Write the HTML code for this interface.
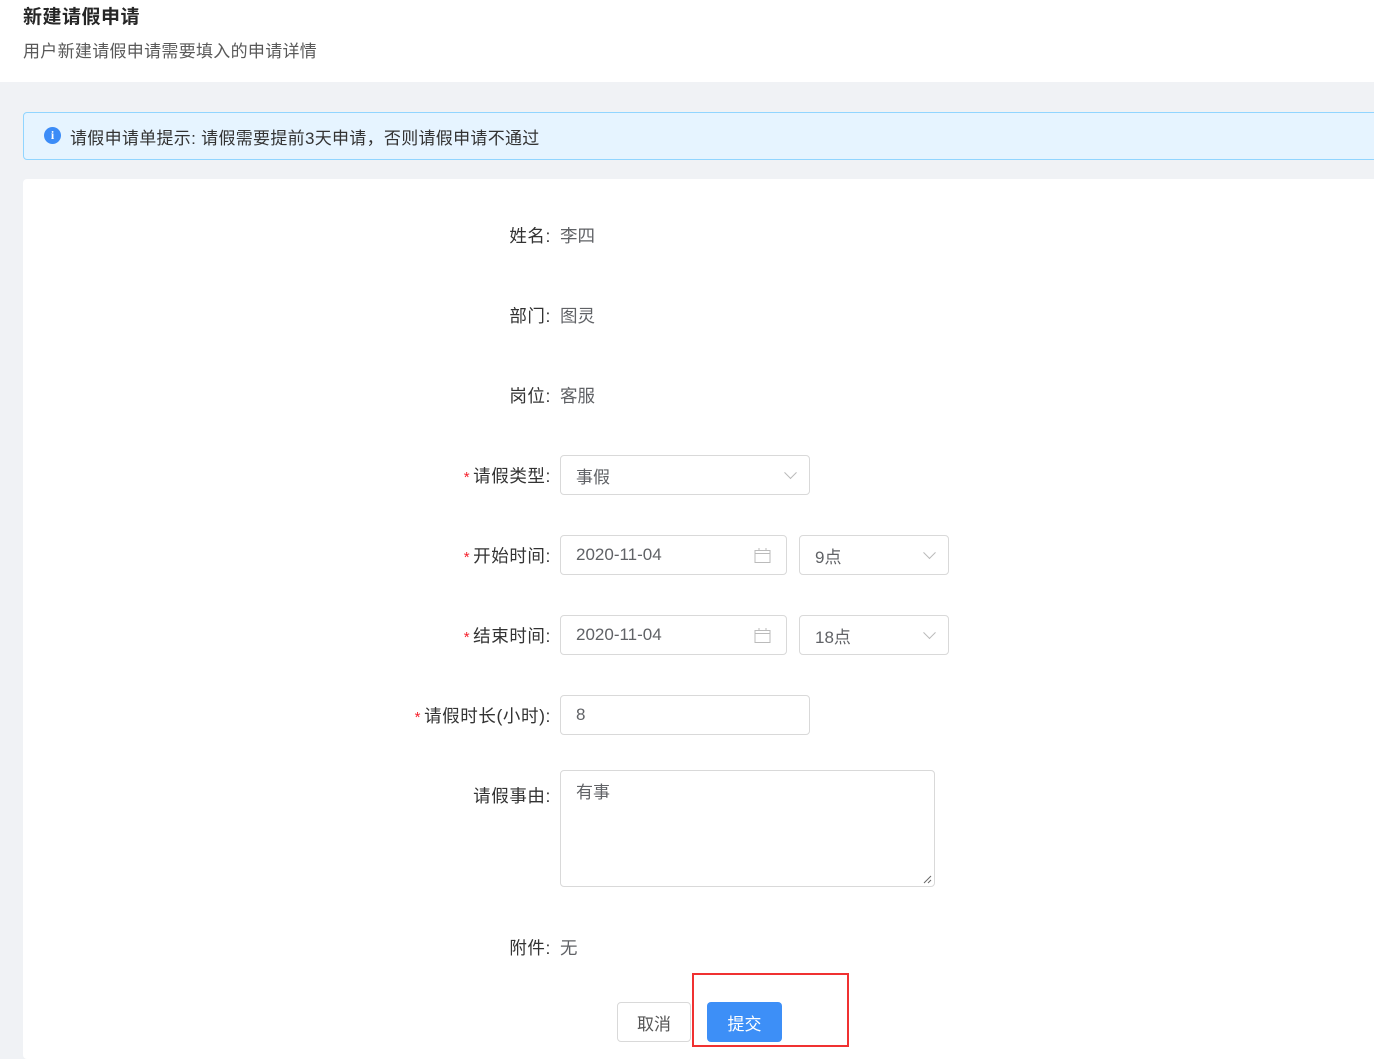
<!DOCTYPE html>
<html><head><meta charset="utf-8"><style>
*{box-sizing:border-box;margin:0;padding:0}
body{width:1374px;height:1049px;overflow:hidden;background:#f0f2f5;font-family:"Liberation Sans","Noto Sans CJK SC",sans-serif;position:relative}
.abs{position:absolute}
.hdr{left:0;top:0;width:1374px;height:82px;background:#fff}
.lbl{position:absolute;right:823px;font-size:17.5px;letter-spacing:0.6px;color:#333;line-height:24px;white-space:nowrap}
.req{color:#f5222d;font-size:15px;margin-right:3px}
.val{position:absolute;left:560px;font-size:17.5px;color:#606266;line-height:24px}
.box{position:absolute;border:1px solid #d9d9d9;border-radius:4px;background:#fff;font-size:17px;color:#606266;padding-left:15px;display:flex;align-items:center}
.chev{position:absolute;right:14px;top:50%;width:9px;height:9px;border-right:1px solid #bbb;border-bottom:1px solid #bbb;transform:translateY(-75%) rotate(45deg)}
</style></head><body>
<div class="abs hdr"></div>
<div class="abs" style="left:23px;top:2px;font-size:19px;font-weight:bold;color:#262626;letter-spacing:0.5px">新建请假申请</div>
<div class="abs" style="left:23px;top:37px;font-size:17px;color:#595959;letter-spacing:0.3px">用户新建请假申请需要填入的申请详情</div>
<div class="abs" style="left:23px;top:112px;width:1360px;height:48px;background:#e6f4ff;border:1px solid #91d5ff;border-radius:4px"></div>
<div class="abs" style="left:44px;top:127px;width:17px;height:17px;border-radius:50%;background:#3c8cf7;color:#fff;font-size:12px;font-weight:bold;text-align:center;line-height:17px;font-family:'Liberation Serif',serif">i</div>
<div class="abs" style="left:70px;top:124px;font-size:17px;color:#333;letter-spacing:0.3px">请假申请单提示: 请假需要提前3天申请，否则请假申请不通过</div>
<div class="abs" style="left:23px;top:179px;width:1360px;height:880px;background:#fff;border-radius:4px"></div>

<div class="lbl" style="top:224px">姓名:</div><div class="val" style="top:224px">李四</div>
<div class="lbl" style="top:304px">部门:</div><div class="val" style="top:304px">图灵</div>
<div class="lbl" style="top:384px">岗位:</div><div class="val" style="top:384px">客服</div>

<div class="lbl" style="top:464px"><span class="req">*</span>请假类型:</div>
<div class="box" style="left:560px;top:455px;width:250px;height:40px">事假<span class="chev"></span></div>

<div class="lbl" style="top:544px"><span class="req">*</span>开始时间:</div>
<div class="box" style="left:560px;top:535px;width:227px;height:40px">2020-11-04
<svg style="position:absolute;right:15px;top:12px" width="17" height="15" viewBox="0 0 17 15"><rect x="1" y="2.5" width="15" height="12" fill="none" stroke="#bbb"/><line x1="1" y1="5.5" x2="16" y2="5.5" stroke="#bbb"/><line x1="5" y1="0" x2="5" y2="3" stroke="#bbb"/><line x1="12" y1="0" x2="12" y2="3" stroke="#bbb"/></svg></div>
<div class="box" style="left:799px;top:535px;width:150px;height:40px">9点<span class="chev"></span></div>

<div class="lbl" style="top:624px"><span class="req">*</span>结束时间:</div>
<div class="box" style="left:560px;top:615px;width:227px;height:40px">2020-11-04
<svg style="position:absolute;right:15px;top:12px" width="17" height="15" viewBox="0 0 17 15"><rect x="1" y="2.5" width="15" height="12" fill="none" stroke="#bbb"/><line x1="1" y1="5.5" x2="16" y2="5.5" stroke="#bbb"/><line x1="5" y1="0" x2="5" y2="3" stroke="#bbb"/><line x1="12" y1="0" x2="12" y2="3" stroke="#bbb"/></svg></div>
<div class="box" style="left:799px;top:615px;width:150px;height:40px">18点<span class="chev"></span></div>

<div class="lbl" style="top:704px"><span class="req">*</span>请假时长(小时):</div>
<div class="box" style="left:560px;top:695px;width:250px;height:40px">8</div>

<div class="lbl" style="top:784px">请假事由:</div>
<div class="box" style="left:560px;top:770px;width:375px;height:117px;align-items:flex-start;padding-top:7px">有事
<svg style="position:absolute;right:2px;bottom:2px" width="9" height="9"><line x1="1" y1="8" x2="8" y2="1" stroke="#666"/><line x1="5" y1="8" x2="8" y2="5" stroke="#666"/></svg></div>

<div class="lbl" style="top:936px">附件:</div><div class="val" style="top:936px">无</div>

<div class="box" style="left:617px;top:1002px;width:74px;height:40px;padding:0;justify-content:center;color:#555">取消</div>
<div class="abs" style="left:707px;top:1002px;width:75px;height:40px;background:#3d8ff7;border-radius:4px;color:#fff;font-size:17px;display:flex;align-items:center;justify-content:center">提交</div>
<div class="abs" style="left:692px;top:973px;width:157px;height:74px;border:2px solid #f03131"></div>
</body></html>
